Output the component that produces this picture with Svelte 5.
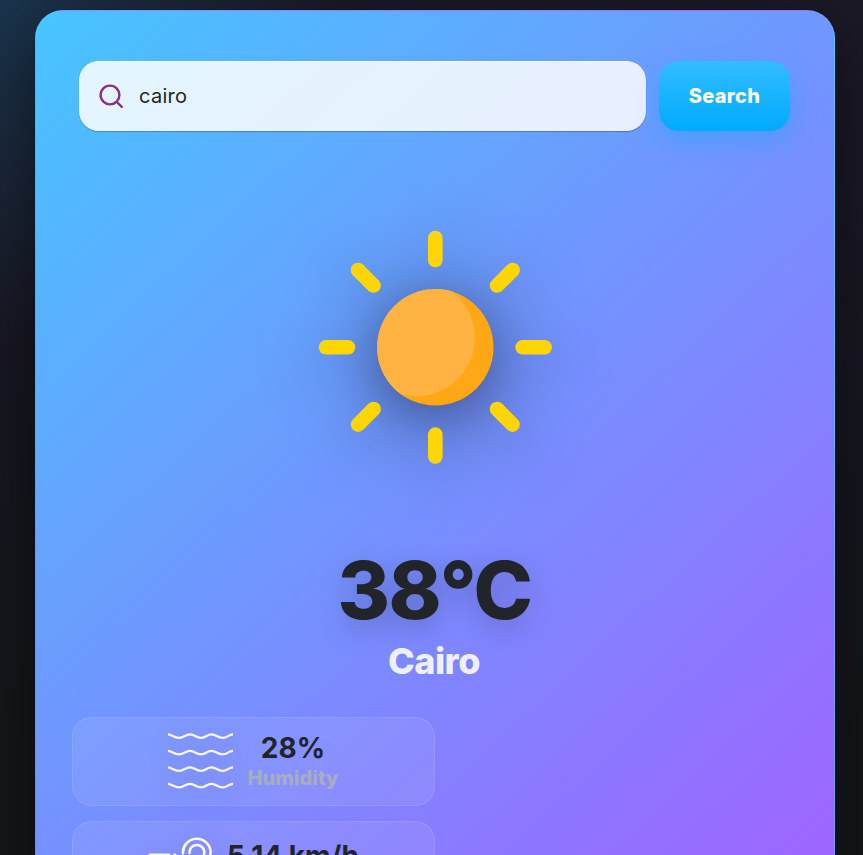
<script>
  let city = $state('cairo');
  const rays = [0, 45, 90, 135, 180, 225, 270, 315];
  const waves = [0, 16.5, 33, 49.5];
</script>

<main>
  <section class="card">
    <form class="search" onsubmit={(e) => e.preventDefault()}>
      <label class="field">
        <svg width="26" height="26" viewBox="0 0 26 26" fill="none" stroke="#8b2f86" stroke-width="2.4" stroke-linecap="round">
          <circle cx="12" cy="12" r="9.4" />
          <path d="M18.8 19 23.8 23.8" />
        </svg>
        <input bind:value={city} aria-label="City" spellcheck="false" />
      </label>
      <button>Search</button>
    </form>

    <div class="weather">
      <svg class="sun" width="300" height="300" viewBox="-150.3 -150.3 300 300">
        <clipPath id="disc"><circle r="58.2" /></clipPath>
        {#each rays as angle}
          <rect x="-7.3" y="-116.6" width="14.6" height="36.6" rx="7.3" fill="#ffd506" transform={`rotate(${angle})`} />
        {/each}
        <circle r="58.2" fill="#ffa714" />
        <circle cx="-19" cy="-9.5" r="58.5" fill="#ffb342" clip-path="url(#disc)" />
      </svg>
      <h1>38°C</h1>
      <h2>Cairo</h2>
    </div>

    <div class="details">
      <div class="detail">
        <svg class="icon" width="65" height="57" viewBox="0 0 65 57" fill="none" stroke="#fff" stroke-opacity=".93" stroke-width="2.3">
          {#each waves as y}
            <path d={`M-1 ${y + 1.3}C4 ${y + 1.3} 5.5 ${y + 4.8} 11 ${y + 4.8}S17 ${y + 1.3} 22 ${y + 1.3}S27.5 ${y + 4.8} 33 ${y + 4.8}S38.5 ${y + 1.3} 43.5 ${y + 1.3}S49 ${y + 4.8} 54.5 ${y + 4.8}S60 ${y + 1.3} 66 ${y + 1.3}`} />
          {/each}
        </svg>
        <div class="reading">
          <strong>28%</strong>
          <span>Humidity</span>
        </div>
      </div>
      <div class="detail wind">
        <svg class="icon" width="65" height="65" viewBox="0 0 65 65" fill="none" stroke="#fff" stroke-opacity=".95" stroke-width="2.6" stroke-linecap="round">
          <path d="M3 17.7H22M27.5 17.7H28M36 16.5A13.8 13.8 0 1 1 49.8 29.3H1.5" />
          <path d="M42.4 16A7.5 7.5 0 1 1 49.8 23H12" />
          <path d="M1.5 39H42A8 8 0 1 1 34 47" />
        </svg>
        <div class="reading">
          <strong>5.14 km/h</strong>
          <span>Wind Speed</span>
        </div>
      </div>
    </div>
  </section>
</main>

<style>
  :global(body) { background: #14171a; }
  main {
    box-sizing: border-box;
    height: 855px;
    overflow: hidden;
    display: flex;
    justify-content: center;
    align-items: flex-start;
    padding: 10px 28px 0 35px;
    font-family: Inter, "Liberation Sans", sans-serif;
    color: #212529;
    background:
      radial-gradient(circle at 0 0, #1a344d 0, rgba(26, 48, 70, 0) 340px),
      linear-gradient(180deg, #1c1927 0, #171721 400px, #14171a 750px);
  }
  .card {
    box-sizing: border-box;
    flex: none;
    width: 800px;
    height: 956px;
    padding: 50px 36px 36px;
    border: 1px solid rgba(255, 255, 255, 0.06);
    border-radius: 28px;
    background: linear-gradient(137deg, #47c5ff 0%, #6c9bff 40%, #a65cff 102%);
    box-shadow: 0 20px 60px rgba(0, 0, 0, 0.5);
  }
  .search { display: flex; gap: 13px; padding: 0 8px 0 7px; }
  .field {
    box-sizing: border-box;
    flex: 1;
    min-width: 0;
    height: 70px;
    display: flex;
    align-items: center;
    gap: 15px;
    padding: 0 20px 0 19px;
    border-radius: 20px;
    background: rgba(255, 255, 255, 0.85);
    box-shadow: inset 0 1px 0 rgba(255, 255, 255, 0.6), 0 1px 1px rgba(0, 0, 0, 0.25);
  }
  input {
    flex: 1;
    min-width: 0;
    padding: 0;
    border: 0;
    outline: 0;
    background: none;
    font: 400 20px Inter, sans-serif;
    color: #212529;
    letter-spacing: 0.3px;
  }
  button {
    width: 131px;
    height: 70px;
    padding: 0;
    border: 0;
    border-radius: 20px;
    color: #fff;
    font: 800 20px Inter, sans-serif;
    letter-spacing: 0.3px;
    background: linear-gradient(180deg, #33bdff, #00aaff);
    box-shadow: 0 10px 24px rgba(0, 170, 255, 0.35);
  }
  .weather { display: flex; flex-direction: column; align-items: center; }
  .sun { margin-top: 66px; filter: drop-shadow(0 12px 30px rgba(0, 0, 0, 0.5)); }
  h1 {
    margin: 43px 1px 0 0;
    font-size: 80px;
    line-height: 100px;
    font-weight: 800;
    letter-spacing: -1.6px;
    text-shadow: 0 8px 28px rgba(0, 0, 0, 0.22);
  }
  h2 { margin: -1px 2px 0 0; font-size: 36px; line-height: 44px; font-weight: 800; letter-spacing: -0.5px; color: rgba(255, 255, 255, 0.9); }
  .details { display: flex; flex-direction: column; gap: 15px; width: 363px; margin-top: 34px; }
  .detail {
    box-sizing: border-box;
    height: 89px;
    display: flex;
    align-items: center;
    justify-content: center;
    gap: 15px;
    padding-right: 1px;
    border: 1px solid rgba(255, 255, 255, 0.1);
    border-radius: 20px;
    background: rgba(255, 255, 255, 0.08);
  }
  .wind { height: 97px; }
  .icon { filter: drop-shadow(0 6px 12px rgba(0, 0, 0, 0.18)); }
  .reading { display: flex; flex-direction: column; align-items: center; padding-top: 2px; }
  strong { font-size: 28px; line-height: 30px; font-weight: 700; }
  .reading span { font-size: 20px; line-height: 30px; font-weight: 800; color: #a7adc0; }
</style>
